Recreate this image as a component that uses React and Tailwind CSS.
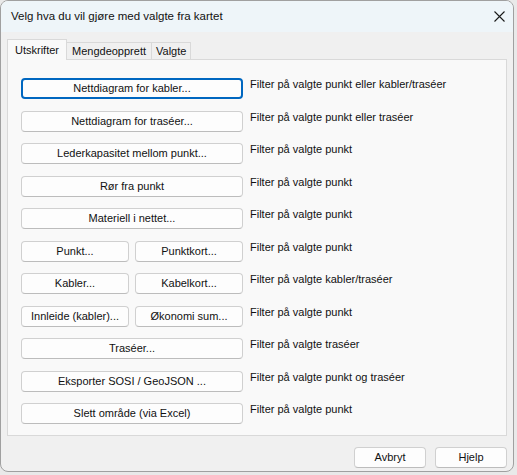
import React from 'react';

const font = { fontFamily: '"Liberation Sans", Arial, sans-serif' };

function Btn({ children, focused, className = '' }) {
  return (
    <div
      className={`h-[21px] flex items-center justify-center rounded-[4px] bg-[#fdfdfd] text-[11px] text-[#111] ${
        focused ? 'border-2 border-[#0067c0]' : 'border border-[#d0d0d0] border-b-[#bcbcbc]'
      } ${className}`}
    >
      {children}
    </div>
  );
}

const rows = [
  { buttons: ['Nettdiagram for kabler...'], label: 'Filter på valgte punkt eller kabler/traséer', focused: true },
  { buttons: ['Nettdiagram for traséer...'], label: 'Filter på valgte punkt eller traséer' },
  { buttons: ['Lederkapasitet mellom punkt...'], label: 'Filter på valgte punkt' },
  { buttons: ['Rør fra punkt'], label: 'Filter på valgte punkt' },
  { buttons: ['Materiell i nettet...'], label: 'Filter på valgte punkt' },
  { buttons: ['Punkt...', 'Punktkort...'], label: 'Filter på valgte punkt' },
  { buttons: ['Kabler...', 'Kabelkort...'], label: 'Filter på valgte kabler/traséer' },
  { buttons: ['Innleide (kabler)...', 'Økonomi sum...'], label: 'Filter på valgte punkt' },
  { buttons: ['Traséer...'], label: 'Filter på valgte traséer' },
  { buttons: ['Eksporter SOSI / GeoJSON ...'], label: 'Filter på valgte punkt og traséer' },
  { buttons: ['Slett område (via Excel)'], label: 'Filter på valgte punkt' },
];

export default function App() {
  return (
    <div className="w-[517px] h-[475px] bg-[#e9e9e9]" style={font}>
      <div className="w-[514px] h-[472px] rounded-[8px] border border-[#a0a0a0] bg-[#f0f0f0] overflow-hidden flex flex-col">
        {/* Title bar */}
        <div className="h-[31px] shrink-0 bg-[#eef5f9] flex items-center justify-between pl-[10px] pr-[8px]">
          <span className="text-[11.5px] text-[#111]">Velg hva du vil gjøre med valgte fra kartet</span>
          <svg width="11" height="11" viewBox="0 0 11 11" className="mb-[1px]">
            <path d="M0.5 0.5 L10.5 10.5 M10.5 0.5 L0.5 10.5" stroke="#1a1a1a" strokeWidth="1.1" />
          </svg>
        </div>

        <div className="px-[6px] pt-[7px] flex flex-col">
          {/* Tabs */}
          <div className="h-[20px] flex items-end">
            <div className="relative z-10 -mb-px h-[21px] px-[7px] flex items-center bg-[#f9f9f9] border border-b-0 border-[#d9d9d9] text-[11px] text-[#111]">
              Utskrifter
            </div>
            <div className="h-[17px] px-[5px] flex items-center border border-l-0 border-b-0 border-[#d9d9d9] text-[11px] text-[#111]">
              Mengdeopprett
            </div>
            <div className="h-[17px] px-[4px] flex items-center border border-l-0 border-b-0 border-[#d9d9d9] text-[11px] text-[#111]">
              Valgte
            </div>
          </div>

          {/* Panel */}
          <div className="h-[377px] bg-[#f9f9f9] border border-[#d9d9d9] pl-[13px] pt-[18px] flex flex-col gap-[11.5px]">
            {rows.map((row, i) => (
              <div key={i} className="flex items-start gap-[7px]">
                <div className="w-[222px] flex gap-[6px]">
                  {row.buttons.map((b) => (
                    <Btn key={b} focused={row.focused} className="flex-1">
                      {b}
                    </Btn>
                  ))}
                </div>
                <span className="text-[11px] leading-[16px] -mt-[2px] text-[#111]">{row.label}</span>
              </div>
            ))}
          </div>

          {/* Bottom buttons */}
          <div className="mt-[11px] flex justify-end gap-[9px]">
            <Btn className="w-[72px] h-[20px]">Avbryt</Btn>
            <Btn className="w-[72px] h-[20px]">Hjelp</Btn>
          </div>
        </div>
      </div>
    </div>
  );
}
